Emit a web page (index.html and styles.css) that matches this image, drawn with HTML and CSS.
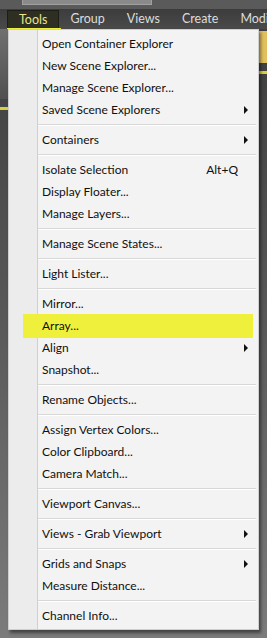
FILE: index.html
```html
<!DOCTYPE html>
<html>
<head>
    <meta http-equiv="Content-Type" content="text/html; charset=utf-8">
    <title>Tools menu</title>
    <link rel="stylesheet" href="styles.css">
</head>
<body>
    <div class="top-strip">
        <div class="top-field"></div>
    </div>

    <div class="menubar">
        <div class="menubar-item active">Tools</div>
        <div class="menubar-item">Group</div>
        <div class="menubar-item">Views</div>
        <div class="menubar-item">Create</div>
        <div class="menubar-item">Modif</div>
        <div class="marker"></div>
    </div>

    <div class="workspace">
        <div class="side side-left">
            <div class="side-icons"></div>
            <div class="side-line"></div>
        </div>
        <div class="side side-right">
            <div class="side-swatch"></div>
            <div class="side-line"></div>
        </div>

        <!-- dropdown -->
        <div class="dropdown">
            <div class="item">Open Container Explorer</div>
            <div class="item">New Scene Explorer...</div>
            <div class="item">Manage Scene Explorer...</div>
            <div class="item sub">Saved Scene Explorers</div>
            <div class="sep"></div>
            <div class="item sub">Containers</div>
            <div class="sep"></div>
            <div class="item">Isolate Selection<span class="shortcut">Alt+Q</span></div>
            <div class="item">Display Floater...</div>
            <div class="item">Manage Layers...</div>
            <div class="sep"></div>
            <div class="item">Manage Scene States...</div>
            <div class="sep"></div>
            <div class="item">Light Lister...</div>
            <div class="sep"></div>
            <div class="item">Mirror...</div>
            <div class="item marked">Array...</div>
            <div class="item sub">Align</div>
            <div class="item">Snapshot...</div>
            <div class="sep"></div>
            <div class="item">Rename Objects...</div>
            <div class="sep"></div>
            <div class="item">Assign Vertex Colors...</div>
            <div class="item">Color Clipboard...</div>
            <div class="item">Camera Match...</div>
            <div class="sep"></div>
            <div class="item">Viewport Canvas...</div>
            <div class="sep"></div>
            <div class="item sub">Views - Grab Viewport</div>
            <div class="sep"></div>
            <div class="item sub">Grids and Snaps</div>
            <div class="item">Measure Distance...</div>
            <div class="sep"></div>
            <div class="item">Channel Info...</div>
        </div>
    </div>
</body>
</html>
```

FILE: styles.css
```css
body, html {
    margin: 0;
    height: 100%;
    overflow: hidden;
    background: #7b7b7b;
    font-family: "Lato", "Noto Sans", sans-serif;
}

.top-strip {
    height: 9px;
    background: #5a5a5a;
    position: relative;
}

.top-field {
    margin-left: 22px;
    width: 128px;
    height: 4px;
    background: #8a8a8a;
    border: 1px solid #a0a0a0;
    border-top: none;
}

.menubar {
    height: 20px;
    display: flex;
    align-items: center;
    padding-left: 7px;
    background: linear-gradient(#3c3c3c, #4a4a4a);
    position: relative;
    white-space: nowrap;
    overflow: hidden;
}

.menubar-item {
    color: #dcdcdc;
    font-size: 12.5px;
    padding: 0 11px;
    height: 19px;
    line-height: 18px;
}

.menubar-item:last-of-type {
    padding-right: 0;
}

.menubar-item.active {
    color: #e6e68a;
    background: #2e2f22;
    border: 1px solid #1e1e18;
    box-sizing: border-box;
    width: 54px;
    padding: 0 11px;
}

.marker {
    position: absolute;
    left: 7px;
    top: 19px;
    width: 54px;
    height: 9px;
    background: #eef03a;
}

.workspace {
    position: relative;
    height: 609px;
}

.side {
    position: absolute;
    top: 0;
    bottom: 0;
    width: 9px;
    background: linear-gradient(#3e3e3e, #5a5a5a 50%, #7c7c7c);
}

.side-left {
    left: 0;
}

.side-right {
    right: 0;
}

.side-icons {
    height: 70px;
    background: linear-gradient(#707070, #505050);
}

.side-swatch {
    height: 32px;
    margin-top: 2px;
    background: #e2c060;
}

.side-line {
    height: 3px;
    margin-top: 8px;
    background: #d8d040;
}

.dropdown {
    position: absolute;
    left: 8px;
    top: 0;
    width: 251px;
    padding: 3px 0 2px;
    background: linear-gradient(90deg, #ececec 28px, #d0d0d0 28px, #d0d0d0 29px, #f3f3f3 29px);
    border: 1px solid #cfcfcf;
    box-sizing: border-box;
    box-shadow: 2px 3px 3px rgba(0, 0, 0, 0.45);
}

.item {
    height: 22px;
    line-height: 22px;
    padding-left: 33px;
    font-size: 12px;
    color: #101010;
    position: relative;
    display: flex;
}

.item.marked {
    background: #eef03c;
    margin: 0 5px 0 14px;
    padding-left: 19px;
    height: 24px;
    line-height: 24px;
    margin-top: -1px;
    margin-bottom: -1px;
}

.shortcut {
    margin-left: auto;
    margin-right: 20px;
}

.sub::after {
    content: "";
    position: absolute;
    right: 10px;
    top: 7px;
    border-left: 4px solid #111;
    border-top: 4px solid transparent;
    border-bottom: 4px solid transparent;
}

.sep {
    height: 8px;
    margin-left: 29px;
    margin-right: 2px;
    background: linear-gradient(transparent 3px, #d8d8d8 3px, #d8d8d8 4px, #ffffff 4px, #ffffff 5px, transparent 5px);
}
```
